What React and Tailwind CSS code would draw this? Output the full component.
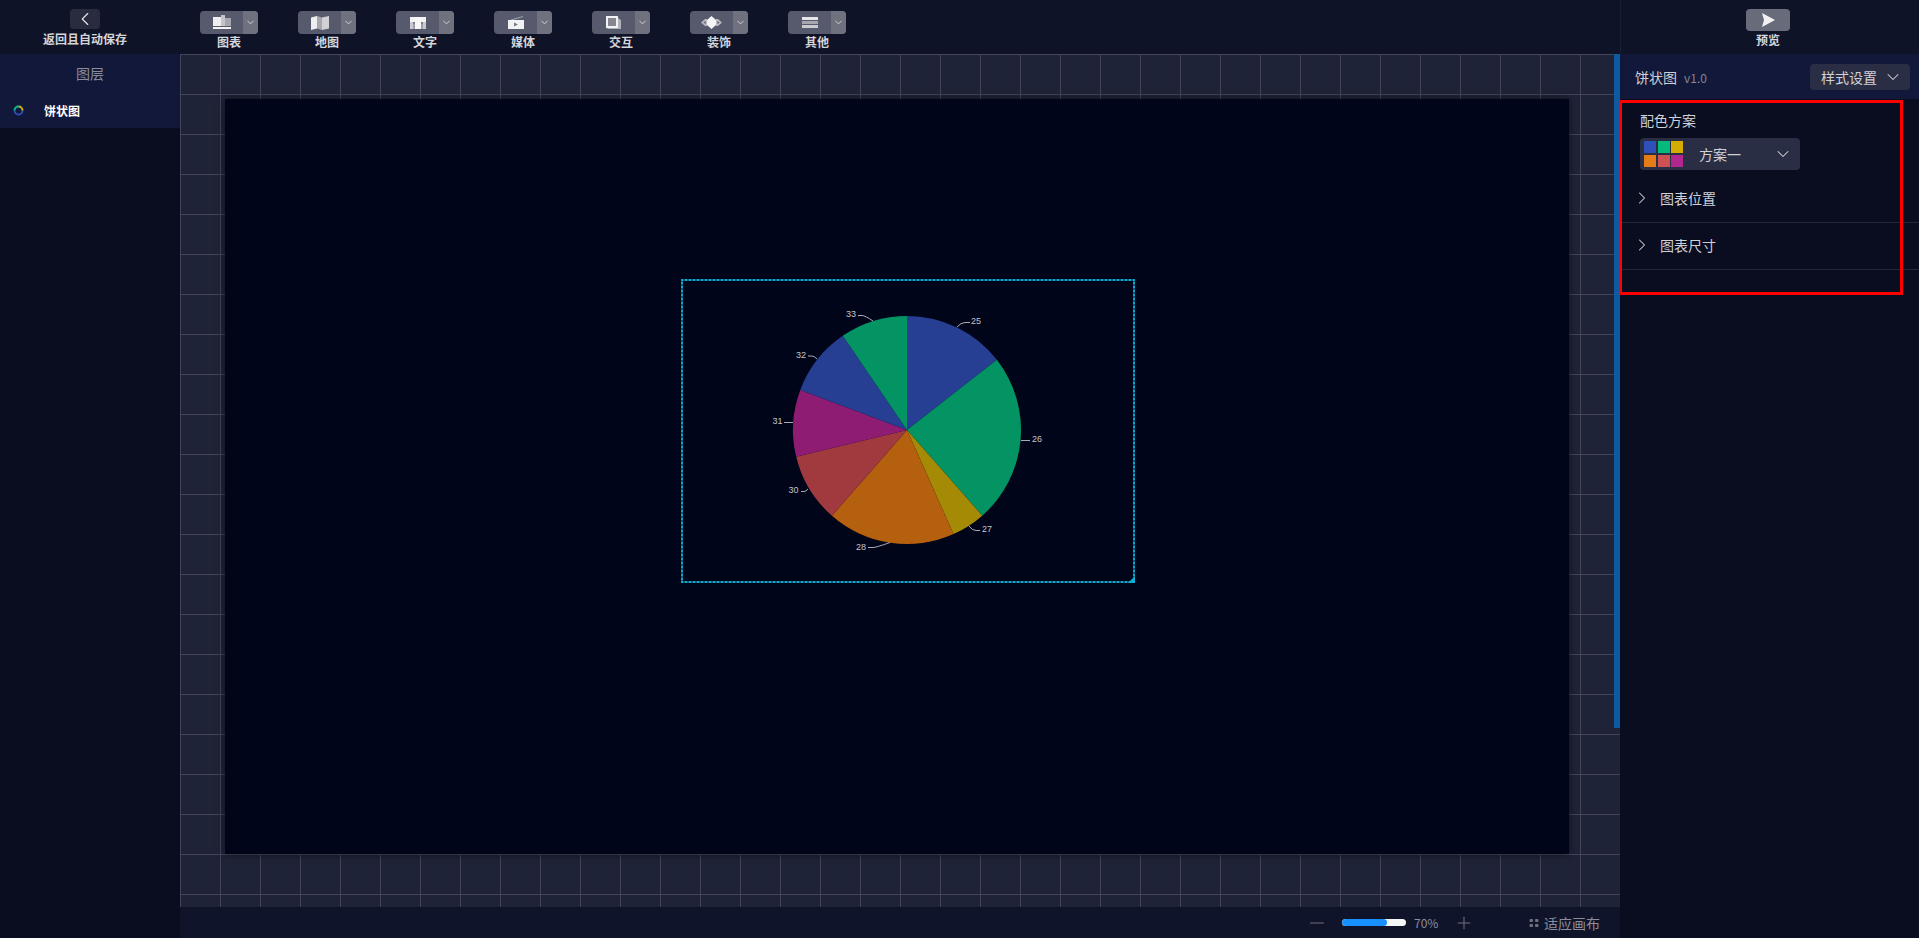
import { ChevronDown, ChevronLeft, ChevronRight, Minus, Plus } from "lucide-react";

const ChartIcon = () => (
  <svg width="18" height="15" viewBox="0 0 18 15" fill="none">
    <rect x="0" y="2" width="8" height="9" fill="#eeeef0" />
    <rect x="8" y="0" width="4" height="11" fill="#c4c5cb" />
    <rect x="12" y="3" width="6" height="8" fill="#a5a6ae" />
    <rect x="0" y="12" width="18" height="2" fill="#f2f2f4" />
  </svg>
);

const MapIcon = () => (
  <svg width="18" height="14" viewBox="0 0 18 14" fill="none">
    <path d="M0 1.5 L6 0 V12.5 L0 14 Z" fill="#eeeef0" />
    <path d="M6 0 L11 1.5 V14 L6 12.5 Z" fill="#a5a6ae" />
    <path d="M11 1.5 L18 0 V12.5 L11 14 Z" fill="#d0d0d5" />
  </svg>
);

const TextIcon = () => (
  <svg width="16" height="12" viewBox="0 0 16 12" fill="none">
    <rect x="0" y="0" width="16" height="12" fill="#c9c9cf" />
    <rect x="0" y="0" width="16" height="5" fill="#f2f2f4" />
    <rect x="5" y="0" width="6" height="12" fill="#f7f7f8" />
    <rect x="3" y="5" width="2" height="2" fill="#7f808b" />
    <rect x="11" y="5" width="2" height="2" fill="#7f808b" />
    <rect x="3" y="7" width="2" height="5" fill="#9d9ea8" />
    <rect x="11" y="7" width="2" height="5" fill="#9d9ea8" />
  </svg>
);

const MediaIcon = () => (
  <svg width="16" height="13" viewBox="0 0 16 13" fill="none">
    <path d="M3 4 L15 0.5" stroke="#a5a6ae" strokeWidth="1" />
    <rect x="0" y="4" width="16" height="9" fill="#f2f2f4" />
    <path d="M6 6.5 L10 8.5 L6 10.5 Z" fill="#777885" />
  </svg>
);

const InteractIcon = () => (
  <svg width="16" height="13" viewBox="0 0 16 13" fill="none">
    <rect x="0" y="0" width="12" height="12" fill="#f2f2f4" />
    <rect x="2" y="2" width="8" height="8" fill="#85868f" />
    <path d="M12 2 L15 4 V13 H3 L0 12 H12 Z" fill="#b2b3ba" />
  </svg>
);

const DecorIcon = () => (
  <svg width="21" height="13" viewBox="0 0 21 13" fill="none">
    <path d="M0 6.5 L4 3 H6 V10 H4 Z" fill="#b9bac1" />
    <path d="M21 6.5 L17 3 H15 V10 H17 Z" fill="#b9bac1" />
    <path d="M2.5 6.5 L4.5 5 V8 Z" fill="#565a6c" />
    <path d="M18.5 6.5 L16.5 5 V8 Z" fill="#565a6c" />
    <path d="M10.5 0 L15 4 V9 L10.5 13 L6 9 V4 Z" fill="#f4f4f6" />
  </svg>
);

const OtherIcon = () => (
  <svg width="16" height="11" viewBox="0 0 16 11" fill="none">
    <rect x="0" y="0" width="16" height="3" fill="#e6e6e9" />
    <rect x="0" y="4" width="16" height="3" fill="#a5a6ae" />
    <rect x="0" y="8" width="16" height="3" fill="#c9c9cf" />
  </svg>
);

const tools = [
  { label: "图表", Icon: ChartIcon },
  { label: "地图", Icon: MapIcon },
  { label: "文字", Icon: TextIcon },
  { label: "媒体", Icon: MediaIcon },
  { label: "交互", Icon: InteractIcon },
  { label: "装饰", Icon: DecorIcon },
  { label: "其他", Icon: OtherIcon },
];

const swatches = ["bg-[#2f50b8]", "bg-[#06b97c]", "bg-[#d4ad02]", "bg-[#e67c17]", "bg-[#ce5154]", "bg-[#b2278e]"];

// boundary angles read off the picture, clockwise from 12 o'clock
const slices = [
  { from: 0, to: 52, color: "#263f93" },
  { from: 52, to: 138.7, color: "#049463" },
  { from: 138.7, to: 155.9, color: "#a58a05" },
  { from: 155.9, to: 221.2, color: "#b5600f" },
  { from: 221.2, to: 256.4, color: "#a13a3f" },
  { from: 256.4, to: 290.6, color: "#8e1c72" },
  { from: 290.6, to: 325.7, color: "#263f93" },
  { from: 325.7, to: 360, color: "#049463" },
];

const CX = 225;
const CY = 150;
const R = 114;

const point = (deg) => {
  const rad = (deg * Math.PI) / 180;
  return [CX + R * Math.sin(rad), CY - R * Math.cos(rad)];
};

const slicePath = ({ from, to }) => {
  const [x1, y1] = point(from);
  const [x2, y2] = point(to);
  return `M${CX} ${CY} L${x1} ${y1} A${R} ${R} 0 ${to - from > 180 ? 1 : 0} 1 ${x2} ${y2} Z`;
};

const labels = [
  { text: "25", x: 289, y: 42, anchor: "start", line: "M275 47 Q279 42.5 283 42.5 H288" },
  { text: "26", x: 350, y: 160, anchor: "start", line: "M339 160.5 H348" },
  { text: "27", x: 300, y: 249.5, anchor: "start", line: "M287 246 Q290 250.5 294 250.5 H298" },
  { text: "28", x: 184, y: 267.5, anchor: "end", line: "M208 262.5 Q194 267.5 191 267.5 H186" },
  { text: "30", x: 116.5, y: 210.5, anchor: "end", line: "M126 209 Q124 211.5 122 211.5 H119" },
  { text: "31", x: 100.5, y: 142, anchor: "end", line: "M111 142.5 H102" },
  { text: "32", x: 124, y: 75.5, anchor: "end", line: "M135 79 Q132 76 130 76 H126" },
  { text: "33", x: 174, y: 35, anchor: "end", line: "M191 41 Q183 35.5 180 35.5 H176" },
];

function PieChart() {
  return (
    <svg width="450" height="300" viewBox="1 1 450 300" className="block">
      {slices.map((s, i) => (
        <path key={i} d={slicePath(s)} fill={s.color} />
      ))}
      {labels.map((l) => (
        <path key={l.text} d={l.line} stroke="#a9abb3" strokeWidth="1" fill="none" />
      ))}
      {labels.map((l) => (
        <text
          key={l.text}
          x={l.x}
          y={l.y}
          textAnchor={l.anchor}
          fontSize="9"
          fill="#c4c5ca"
          fontFamily="Liberation Sans, sans-serif"
          dominantBaseline="middle"
        >
          {l.text}
        </text>
      ))}
    </svg>
  );
}

export default function App() {
  return (
    <div className="flex h-screen w-full flex-col overflow-hidden bg-[#0a0d1f] font-['Noto_Sans_CJK_SC','Liberation_Sans',sans-serif] text-white">
      {/* Top toolbar */}
      <header className="flex h-[54px] shrink-0 bg-[#0f1328]">
        <div className="flex w-[180px] shrink-0 flex-col items-center pt-[9px] pr-[10px]">
          <div className="flex h-[20px] w-[30px] items-center justify-center rounded-sm bg-[#292c3e]">
            <ChevronLeft size={22} strokeWidth={1.25} className="text-[#e6e6e9]" />
          </div>
          <span className="mt-[1px] text-xs leading-[18px] font-bold text-[#d5d5d9]">返回且自动保存</span>
        </div>
        <div className="flex flex-1 gap-[40px] pt-[11px] pl-[20px]">
          {tools.map(({ label, Icon }) => (
            <div key={label} className="flex w-[58px] flex-col items-center">
              <div className="flex h-[23px] w-full overflow-hidden rounded bg-[#565a6c]">
                <div className="flex flex-1 items-center justify-center">
                  <Icon />
                </div>
                <div className="flex w-[15px] items-center justify-center bg-[#70717f]">
                  <ChevronDown size={11} strokeWidth={2} className="text-[#d8d8dc]" />
                </div>
              </div>
              <span className="text-xs leading-[16px] font-bold text-[#d5d5d9]">{label}</span>
            </div>
          ))}
        </div>
        <div className="flex w-[299px] shrink-0 flex-col items-center border-l border-[#1a1e33] pt-[9px] pr-[4px]">
          <div className="flex h-[22px] w-[44px] items-center justify-center rounded-sm bg-[#686b7a]">
            <svg width="14" height="14" viewBox="0 0 14 14">
              <path d="M1 0 L14 7 L1 14 L3 7 Z" fill="#f2f2f4" />
            </svg>
          </div>
          <span className="text-xs leading-[18px] font-bold text-[#d5d5d9]">预览</span>
        </div>
      </header>

      <div className="flex min-h-0 flex-1">
        {/* Layers */}
        <aside className="w-[180px] shrink-0 bg-[#0a0d1f]">
          <div className="flex h-[37px] items-center justify-center bg-[#12183a] text-sm text-[#8b8d9b]">图层</div>
          <div className="flex h-[37px] items-center bg-[#12183a] pt-[2px] pl-[13px]">
            <svg width="11" height="11" viewBox="0 0 11 11" className="mr-[20px]">
              <circle cx="5.5" cy="5.5" r="4" fill="none" stroke="#2f50b8" strokeWidth="1.8" />
              <path d="M5.5 1.5 A4 4 0 0 1 9.5 5.5" fill="none" stroke="#d4ad02" strokeWidth="1.8" />
              <path d="M1.5 5.5 A4 4 0 0 1 5.5 1.5" fill="none" stroke="#06b97c" strokeWidth="1.8" />
            </svg>
            <span className="text-xs font-bold text-white">饼状图</span>
          </div>
        </aside>

        {/* Canvas */}
        <main className="flex min-w-0 flex-1 flex-col">
          <div className="relative flex-1 overflow-hidden bg-[#1f2338] bg-[linear-gradient(#43465a_1px,transparent_1px),linear-gradient(90deg,#43465a_1px,transparent_1px)] bg-[size:40px_40px] pt-[45px] pl-[45px]">
            <div className="relative h-[755px] w-[1344px] bg-[#000519] shadow-[0_0_8px_rgba(0,0,0,0.6)]">
              <div className="absolute top-[180px] left-[456px] h-[304px] w-[454px] border-2 border-[#075f78]">
                <div className="absolute -inset-[2px] border-2 border-dotted border-[#0aa8cf]" />
                <PieChart />
                <div className="absolute -right-[2px] -bottom-[2px] h-0 w-0 border-b-[7px] border-l-[7px] border-b-[#0ab0d6] border-l-transparent" />
              </div>
            </div>
            <div className="absolute top-0 right-0 h-[674px] w-[6px] bg-[#0d5aa0]" />
          </div>
          <div className="flex h-[31px] shrink-0 items-center bg-[#10142b] pl-[1126px] text-[#8b8d9b]">
            <Minus size={22} strokeWidth={1.25} className="mr-[14px] text-[#6d6f7d]" />
            <div className="h-[7px] w-[64px] overflow-hidden rounded-full bg-[#f4f5f7]">
              <div className="h-full w-[45px] rounded-full bg-[#1890ff]" />
            </div>
            <span className="ml-[8px] w-[24px] text-xs">70%</span>
            <Plus size={20} strokeWidth={1.25} className="ml-[16px] text-[#6d6f7d]" />
            <svg width="10" height="10" viewBox="0 0 10 10" className="ml-[55px]" fill="#6d6f7d">
              <rect x="0.5" y="1" width="3.5" height="3" rx="1" />
              <rect x="6" y="1" width="3.5" height="3" rx="1" />
              <rect x="0.5" y="6" width="3.5" height="3" rx="1" />
              <rect x="6" y="6" width="3.5" height="3" rx="1" />
            </svg>
            <span className="ml-[5px] text-sm text-[#8b8d9b]">适应画布</span>
          </div>
        </main>

        {/* Style panel */}
        <aside className="relative w-[299px] shrink-0 bg-[#0a0d1f]">
          <div className="flex h-[45px] items-center justify-between bg-[#12183a] pr-[9px] pl-[15px]">
            <div className="flex items-baseline">
              <span className="text-sm text-[#d0d1d6]">饼状图</span>
              <span className="ml-[7px] text-xs text-[#85868f]">v1.0</span>
            </div>
            <div className="flex h-[26px] w-[100px] items-center justify-between rounded-sm bg-[#2a2e45] pr-[7px] pl-[11px] text-sm text-[#d0d1d6]">
              样式设置
              <ChevronDown size={20} strokeWidth={1.25} />
            </div>
          </div>
          <div className="px-[20px] pt-[11px]">
            <div className="text-sm leading-[20px] text-[#d0d1d6]">配色方案</div>
            <div className="mt-[8px] flex h-[32px] w-[160px] items-center rounded-sm bg-[#2a2e45] pr-[7px] pl-[4px]">
              <div className="grid grid-cols-3 gap-x-[1.5px] gap-y-[2px]">
                {swatches.map((c) => (
                  <div key={c} className={`h-[12px] w-[12px] ${c}`} />
                ))}
              </div>
              <span className="ml-[16px] flex-1 text-sm text-[#d0d1d6]">方案一</span>
              <ChevronDown size={20} strokeWidth={1.25} className="text-[#d0d1d6]" />
            </div>
          </div>
          <div className="mt-[6px] ml-[2px]">
            {["图表位置", "图表尺寸"].map((t) => (
              <div key={t} className="flex h-[47px] items-center border-b border-[#24273a] pb-[2px] pl-[10px] text-sm text-[#d0d1d6]">
                <ChevronRight size={20} strokeWidth={1.25} className="mr-[8px]" />
                {t}
              </div>
            ))}
          </div>
          {/* Annotation frame */}
          <div className="absolute top-[46px] -left-[1px] h-[195px] w-[284px] border-[3px] border-[#ff0000]" />
        </aside>
      </div>
    </div>
  );
}
